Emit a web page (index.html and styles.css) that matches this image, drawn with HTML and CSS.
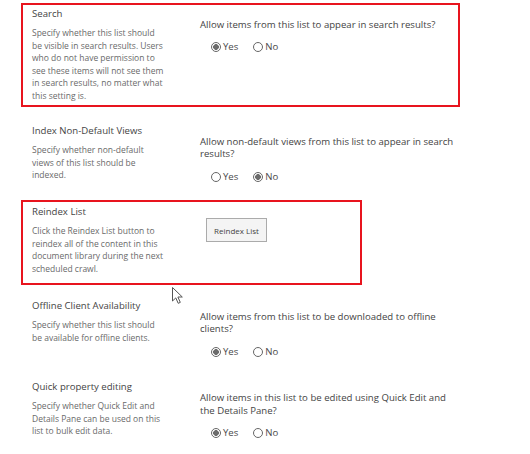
FILE: index.html
```html
<!DOCTYPE html>
<html lang="en">
<head>
<meta charset="utf-8">
<title>List settings</title>
<link rel="stylesheet" href="styles.css">
</head>
<body>
<div class="page">
  <section class="section highlight highlight--search">
    <div class="info">
      <div class="title">Search</div>
      <div class="desc">Specify whether this list should be visible in search results. Users who do not have permission to see these items will not see them in search results, no matter what this setting is.</div>
    </div>
    <div class="field">
      <div class="question">Allow items from this list to appear in search results?</div>
      <div class="choices">
        <label class="choice"><span class="radio radio--on"></span>Yes</label>
        <label class="choice"><span class="radio"></span>No</label>
      </div>
    </div>
  </section>

  <section class="section">
    <div class="info">
      <div class="title">Index Non-Default Views</div>
      <div class="desc">Specify whether non-default views of this list should be indexed.</div>
    </div>
    <div class="field">
      <div class="question">Allow non-default views from this list to appear in search results?</div>
      <div class="choices">
        <label class="choice"><span class="radio"></span>Yes</label>
        <label class="choice"><span class="radio radio--on"></span>No</label>
      </div>
    </div>
  </section>

  <section class="section highlight highlight--reindex">
    <div class="info">
      <div class="title">Reindex List</div>
      <div class="desc">Click the Reindex List button to reindex all of the content in this document library during the next scheduled crawl.</div>
    </div>
    <div class="field">
      <button class="btn" type="button">Reindex List</button>
    </div>
  </section>

  <section class="section section--offline">
    <div class="info">
      <div class="title">Offline Client Availability</div>
      <div class="desc">Specify whether this list should be available for offline clients.</div>
    </div>
    <div class="field">
      <div class="question">Allow items from this list to be downloaded to offline clients?</div>
      <div class="choices">
        <label class="choice"><span class="radio radio--on"></span>Yes</label>
        <label class="choice"><span class="radio"></span>No</label>
      </div>
    </div>
  </section>

  <section class="section">
    <div class="info">
      <div class="title">Quick property editing</div>
      <div class="desc">Specify whether Quick Edit and Details Pane can be used on this list to bulk edit data.</div>
    </div>
    <div class="field">
      <div class="question">Allow items in this list to be edited using Quick Edit and the Details Pane?</div>
      <div class="choices">
        <label class="choice"><span class="radio radio--on"></span>Yes</label>
        <label class="choice"><span class="radio"></span>No</label>
      </div>
    </div>
  </section>
</div>

<svg class="cursor" width="12" height="18" viewBox="0 0 12 18" aria-hidden="true">
  <path d="M0.5 0.5 L0.5 14 L3.8 10.9 L6.2 16.3 L8.3 15.4 L5.9 10 L10.3 10 Z" fill="#fff" stroke="#555" stroke-width="1" stroke-linejoin="round"/>
</svg>
</body>
</html>
```
FILE: styles.css
```css
html, body {
  margin: 0;
  background: #fff;
}

body {
  position: relative;
  width: 530px;
  height: 454px;
  overflow: hidden;
  font-family: "Open Sans", "Noto Sans", sans-serif;
  color: #444;
}

.page {
  display: flex;
  flex-direction: column;
  gap: 22px;
  padding: 7px 0 0 32px;
}

.section {
  position: relative;
  display: grid;
  grid-template-columns: 168px 258px;
}

.section--offline {
  margin-top: 2px;
}

.title {
  font-size: 9.6px;
  line-height: 14px;
  color: #444;
}

.desc {
  width: 134px;
  margin-top: 6px;
  font-size: 8.5px;
  line-height: 12.5px;
  color: #6a6a6a;
}

.field {
  padding-top: 11.7px;
}

.question {
  font-size: 9.6px;
  line-height: 12.7px;
  color: #444;
}

.choices {
  display: flex;
  align-items: center;
  gap: 15px;
  height: 12px;
  margin-top: 10px;
  padding-left: 11px;
}

.choice {
  display: flex;
  align-items: center;
  gap: 2px;
  font-size: 9.6px;
  line-height: 12px;
  color: #4a4a4a;
}

.radio {
  box-sizing: border-box;
  width: 10px;
  height: 10px;
  border: 1px solid #666;
  border-radius: 50%;
  background: #fff;
}

.radio--on {
  background: radial-gradient(circle, #6b6b6b 0 2.6px, #fff 3.1px);
}

.btn {
  box-sizing: border-box;
  width: 61px;
  height: 24px;
  margin-left: 6px;
  padding: 0;
  border: 1px solid #ababab;
  background: #f4f4f4;
  font-family: inherit;
  font-size: 8px;
  color: #444;
}

.highlight::after {
  content: "";
  position: absolute;
  left: -11px;
  border: 2px solid #e8141e;
  pointer-events: none;
}

.highlight--search::after {
  top: -4px;
  width: 435px;
  height: 100px;
}

.highlight--reindex::after {
  top: -5px;
  width: 337px;
  height: 81px;
}

.cursor {
  position: absolute;
  left: 172px;
  top: 287px;
}
```
